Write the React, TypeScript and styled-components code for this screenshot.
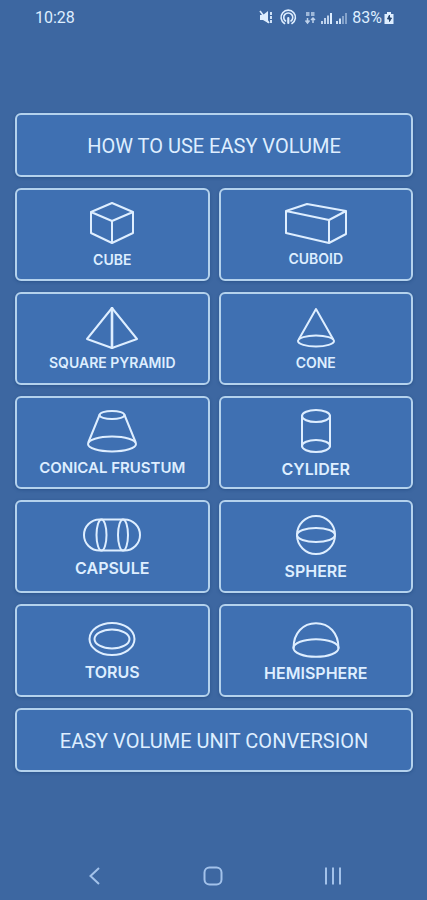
import React from "react";
import styled, { createGlobalStyle } from "styled-components";

const GlobalStyle = createGlobalStyle`
  * { box-sizing: border-box; }
  body { margin: 0; background: #3d67a1; }
`;

const Screen = styled.div`
  min-height: 100vh;
  display: flex;
  flex-direction: column;
  background: #3d67a1;
  color: #deeeff;
  font-family: Roboto, "Liberation Sans", sans-serif;
`;

const StatusBar = styled.header`
  display: flex;
  align-items: center;
  justify-content: space-between;
  height: 36px;
  padding: 0 33px 0 35px;
  font-size: 16px;
  line-height: 20px;
`;

const StatusIcons = styled.div`
  display: flex;
  align-items: center;
  gap: 2px;
`;

const Glyphs = styled.svg`
  display: block;
`;

const Menu = styled.main`
  flex: 1;
  display: flex;
  flex-direction: column;
  gap: 11px;
  padding: 77px 14px 24px 15px;
`;

const tile = `
  border: 2px solid #b4d2ed;
  border-radius: 6px;
  background: #3f70b2;
  box-shadow: 0 1px 3px rgba(25, 65, 120, 0.5);
  color: #deeeff;
  cursor: pointer;
`;

const Banner = styled.button`
  ${tile}
  height: 64px;
  padding: 2px 8px 0;
  font-family: Roboto, "Liberation Sans", sans-serif;
  font-size: 20px;
  line-height: 24px;
`;

const ShapeGrid = styled.div`
  display: grid;
  grid-template-columns: 1fr 1fr;
  gap: 11px 9px;
`;

const ShapeCard = styled.button<{ $gap: number }>`
  ${tile}
  display: flex;
  flex-direction: column;
  align-items: center;
  justify-content: center;
  gap: ${(p) => p.$gap}px;
  height: 93px;
  padding: 0;
`;

const ShapeLabel = styled.span<{ $size: number }>`
  font-family: Inter, "Liberation Sans", sans-serif;
  font-size: ${(p) => p.$size}px;
  font-weight: 600;
  line-height: 14px;
`;

const Drawing = styled.svg`
  display: block;
  fill: none;
  stroke: #deeeff;
  stroke-width: 2;
  stroke-linejoin: round;
  stroke-linecap: round;
`;

const NavBar = styled.nav`
  display: flex;
  justify-content: space-around;
  align-items: center;
  height: 49px;
  padding: 0 34px;
`;

const NavButton = styled.button`
  display: flex;
  padding: 12px;
  border: 0;
  background: none;
  color: #a3c2ea;
  cursor: pointer;
`;

type Shape = {
  name: string;
  width: number;
  height: number;
  gap: number;
  size: number;
  drawing: React.ReactNode;
};

const shapes: Shape[] = [
  {
    name: "CUBE", width: 46, height: 42, gap: 9, size: 14,
    drawing: <path d="M23 1 44 10V31L23 41 2 31V10ZM2 10 23 19 44 10M23 19V41" />,
  },
  {
    name: "CUBOID", width: 62, height: 41, gap: 8, size: 14,
    drawing: <path d="M22 1 61 8V31L44 40 1 30V8ZM1 8 44 17 61 8M44 17V40" />,
  },
  {
    name: "SQUARE PYRAMID", width: 52, height: 42, gap: 7, size: 14,
    drawing: (
      <>
        <path d="M26 1 51 32 26 41 1 32Z" />
        <path d="M26 1V41" strokeWidth="2.6" />
      </>
    ),
  },
  {
    name: "CONE", width: 40, height: 40, gap: 8, size: 14,
    drawing: (
      <>
        <path d="M3 31 20 1 37 31" />
        <ellipse cx="20" cy="33" rx="18" ry="5.5" />
      </>
    ),
  },
  {
    name: "CONICAL FRUSTUM", width: 50, height: 43, gap: 8, size: 15,
    drawing: (
      <>
        <ellipse cx="25" cy="5" rx="12.5" ry="4" />
        <ellipse cx="25" cy="34" rx="24" ry="7.5" />
        <path d="M12.5 5 1.5 32M37.5 5 48.5 32" />
      </>
    ),
  },
  {
    name: "CYLIDER", width: 30, height: 44, gap: 9, size: 16,
    drawing: (
      <>
        <ellipse cx="15" cy="7" rx="14" ry="6" />
        <ellipse cx="15" cy="37" rx="14" ry="6" />
        <path d="M1 7V37M29 7V37" />
      </>
    ),
  },
  {
    name: "CAPSULE", width: 58, height: 34, gap: 9, size: 16,
    drawing: (
      <>
        <rect x="1" y="1.5" width="56" height="31" rx="15.5" />
        <ellipse cx="18.5" cy="17" rx="5" ry="15.5" />
        <ellipse cx="40" cy="17" rx="5" ry="15.5" />
      </>
    ),
  },
  {
    name: "SPHERE", width: 40, height: 40, gap: 9, size: 16,
    drawing: (
      <>
        <circle cx="20" cy="20" r="19" />
        <ellipse cx="20" cy="20" rx="19" ry="7" />
      </>
    ),
  },
  {
    name: "TORUS", width: 48, height: 34, gap: 9, size: 16,
    drawing: (
      <>
        <ellipse cx="24" cy="17" rx="22.5" ry="16" />
        <ellipse cx="24" cy="17" rx="17.5" ry="9.5" />
      </>
    ),
  },
  {
    name: "HEMISPHERE", width: 48, height: 36, gap: 8, size: 16,
    drawing: (
      <>
        <path d="M1.5 26C1.5 11 11 1.2 24 1.2S46.5 11 46.5 26" />
        <ellipse cx="24" cy="26" rx="22.5" ry="8.8" />
      </>
    ),
  },
];

function StatusSymbols() {
  return (
    <Glyphs width="91" height="18" viewBox="0 0 91 18" fill="none" stroke="#deeeff" strokeWidth="1.5" aria-hidden="true">
      <path d="M1 6H4L9 2V14L4 11H1Z" fill="#deeeff" stroke="none" />
      <path d="M1 2 10 14" />
      <path d="M12 3V15" strokeDasharray="3 1" strokeWidth="1.8" />
      <g strokeLinecap="round" strokeWidth="1.6">
        <path d="M25.5 14.5A7.2 7.2 0 1 1 33 14.5" />
        <path d="M26.5 12A4.500 4.500 0 1 1 32 12" />
        <path d="M29.3 9V14" strokeWidth="2.2" />
      </g>
      <path d="M47 4H50.500M47 6H50.500M52 4H55.500M52 6H55.500M48.500 9V14M46.500 11.500 48.500 14 50.500 11.500M54 14V9M52 11 54 9 56 11" strokeWidth="1.5" opacity="0.8" />
      <g stroke="none" fill="#deeeff">
        <path d="M62 12h2v3h-2zM65 9h2v6h-2zM68 6.500h2v8.500h-2z" opacity="0.8" />
        <path d="M71 4h2v11h-2z" />
        <path d="M77 12h2v3h-2zM80 9.500h2v5.500h-2z" opacity="0.9" />
        <path d="M83 7h2v8h-2zM86 4h2v11h-2z" opacity="0.45" />
      </g>
    </Glyphs>
  );
}

function Battery() {
  return (
    <Glyphs width="10" height="14" viewBox="0 0 10 14" aria-hidden="true">
      <path d="M3 1h4v2h2.5v10h-9V3H3z" fill="#deeeff" />
      <path d="M5.5 4 3.500 8h2v2.500l2-3.500h-2z" fill="#294873" stroke="#294873" />
    </Glyphs>
  );
}

export default function App() {
  return (
    <Screen>
      <GlobalStyle />
      <StatusBar>
        <time>10:28</time>
        <StatusIcons>
          <StatusSymbols />
          <span>83%</span>
          <Battery />
        </StatusIcons>
      </StatusBar>
      <Menu>
        <Banner type="button">HOW TO USE EASY VOLUME</Banner>
        <ShapeGrid>
          {shapes.map((s) => (
            <ShapeCard type="button" key={s.name} $gap={s.gap}>
              <Drawing width={s.width} height={s.height} viewBox={`0 0 ${s.width} ${s.height}`} aria-hidden="true">
                {s.drawing}
              </Drawing>
              <ShapeLabel $size={s.size}>{s.name}</ShapeLabel>
            </ShapeCard>
          ))}
        </ShapeGrid>
        <Banner type="button">EASY VOLUME UNIT CONVERSION</Banner>
      </Menu>
      <NavBar aria-label="System navigation">
        <NavButton type="button" aria-label="Back">
          <svg width="20" height="20" viewBox="0 0 20 20" fill="none" stroke="currentColor" strokeWidth="2">
            <path d="M15 2 6.5 10 15 18" />
          </svg>
        </NavButton>
        <NavButton type="button" aria-label="Home">
          <svg width="20" height="20" viewBox="0 0 20 20" fill="none" stroke="currentColor" strokeWidth="2">
            <rect x="1.5" y="1.5" width="17" height="17" rx="5" />
          </svg>
        </NavButton>
        <NavButton type="button" aria-label="Recent apps">
          <svg width="20" height="20" viewBox="0 0 20 20" fill="none" stroke="currentColor" strokeWidth="2">
            <path d="M3 1.5V18.5M10 1.5V18.5M17 1.5V18.5" />
          </svg>
        </NavButton>
      </NavBar>
    </Screen>
  );
}
